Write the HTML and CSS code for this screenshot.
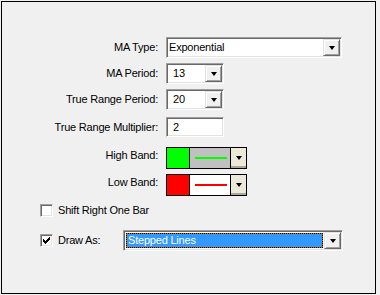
FILE: index.html
```html
<!DOCTYPE html>
<html>
<head>
<meta charset="utf-8">
<link rel="stylesheet" href="styles.css">
</head>
<body>
<div class="frame">
  <div class="row r1">
    <span class="lbl">MA Type:</span>
    <div class="combo w-type">
      <div class="field"><span class="txt txt-name">Exponential</span></div>
      <div class="btn"><span class="arrow"></span></div>
    </div>
  </div>
  <div class="row r2">
    <span class="lbl">MA Period:</span>
    <div class="combo w-small">
      <div class="field"><span class="txt txt-num">13</span></div>
      <div class="btn"><span class="arrow"></span></div>
    </div>
  </div>
  <div class="row r3">
    <span class="lbl">True Range Period:</span>
    <div class="combo w-small">
      <div class="field"><span class="txt txt-num">20</span></div>
      <div class="btn"><span class="arrow"></span></div>
    </div>
  </div>
  <div class="row r4">
    <span class="lbl">True Range Multiplier:</span>
    <div class="textbox"><span class="txt txt-num">2</span></div>
  </div>
  <div class="row r5">
    <span class="lbl lbl-up">High Band:</span>
    <div class="color">
      <div class="swatch sw-green"></div>
      <div class="preview pv-gray"><span class="pline pl-green"></span></div>
      <div class="cbtn"><span class="arrow"></span></div>
    </div>
  </div>
  <div class="row r6">
    <span class="lbl lbl-up2">Low Band:</span>
    <div class="color">
      <div class="swatch sw-red"></div>
      <div class="preview pv-white"><span class="pline pl-red"></span></div>
      <div class="cbtn"><span class="arrow"></span></div>
    </div>
  </div>
  <div class="crow c1">
    <span class="check"></span>
    <span class="ctext">Shift Right One Bar</span>
  </div>
  <div class="crow c2">
    <span class="check">
      <svg width="7" height="7" viewBox="0 0 7 7" shape-rendering="crispEdges">
        <rect x="0" y="2" width="1" height="3" fill="#000"/>
        <rect x="1" y="3" width="1" height="3" fill="#000"/>
        <rect x="2" y="4" width="1" height="3" fill="#000"/>
        <rect x="3" y="3" width="1" height="3" fill="#000"/>
        <rect x="4" y="2" width="1" height="3" fill="#000"/>
        <rect x="5" y="1" width="1" height="3" fill="#000"/>
        <rect x="6" y="0" width="1" height="3" fill="#000"/>
      </svg>
    </span>
    <span class="ctext ctext-draw">Draw As:</span>
    <div class="combo w-draw">
      <div class="field field-focus"><span class="sel">Stepped Lines</span></div>
      <div class="btn"><span class="arrow"></span></div>
    </div>
  </div>
</div>
</body>
</html>
```
FILE: styles.css
```css
html, body {
  margin: 0;
  padding: 0;
  background: #f0f0f0;
}
body {
  font-family: "Liberation Sans", Arial, sans-serif;
  font-size: 11px;
  letter-spacing: -0.2px;
  color: #000;
}
.frame {
  margin: 1px 0 0 1px;
  width: 375px;
  height: 293px;
  box-sizing: border-box;
  border: 1px solid #000;
  background: #f0f0f0;
  overflow: hidden;
}
.row {
  display: flex;
  align-items: center;
}
.r1 { margin-top: 35px; }
.r2 { margin-top: 5px; }
.r3 { margin-top: 5px; }
.r4 { margin-top: 7px; }
.r5 { margin-top: 10px; }
.r6 { margin-top: 5px; }
.lbl {
  width: 156px;
  margin-right: 8px;
  text-align: right;
  white-space: nowrap;
  line-height: 13px;
}
.lbl-up { padding-bottom: 6px; }
.lbl-up2 { padding-bottom: 5px; }

/* sunken 3D controls */
.combo, .textbox {
  box-sizing: border-box;
  height: 21px;
  border: 1px solid;
  border-color: #a0a0a0 #ffffff #ffffff #a0a0a0;
  display: flex;
}
.combo::before { content: none; }
.combo > .field, .textbox > .txt {
  flex: 1;
}
.combo {
  box-shadow: inset 1px 1px 0 #696969, inset -1px -1px 0 #e3e3e3;
  padding: 1px;
}
.textbox {
  height: 20px;
  width: 58px;
  padding: 1px;
  box-shadow: inset 1px 1px 0 #696969, inset -1px -1px 0 #e3e3e3;
}
.w-type { width: 176px; }
.w-small { width: 58px; }
.w-draw { width: 220px; }
.field {
  background: #fff;
  display: flex;
  align-items: center;
  min-width: 0;
}
.textbox {
  background: #fff;
  background-clip: padding-box;
  align-items: center;
}
.txt {
  white-space: nowrap;
  line-height: 13px;
}
.txt-name { padding-left: 1px; }
.txt-num { padding-left: 5px; }
.btn {
  box-sizing: border-box;
  width: 17px;
  height: 17px;
  background: #f0f0f0;
  border: 1px solid;
  border-color: #e3e3e3 #696969 #696969 #e3e3e3;
  box-shadow: inset 1px 1px 0 #fff, inset -1px -1px 0 #a0a0a0;
  display: flex;
  align-items: center;
  justify-content: center;
}
.arrow {
  width: 0;
  height: 0;
  border-left: 3.5px solid transparent;
  border-right: 3.5px solid transparent;
  border-top: 4px solid #000;
}

/* colour pickers */
.color {
  box-sizing: border-box;
  display: flex;
  width: 81px;
  height: 22px;
  border: 1px solid #000;
}
.swatch {
  width: 22px;
  border-right: 1px solid #000;
}
.sw-green { background: #00ff00; }
.sw-red { background: #ff0000; }
.preview {
  width: 40px;
  border-right: 1px solid #000;
  display: flex;
  align-items: center;
  padding-left: 5px;
  box-sizing: border-box;
  width: 41px;
}
.pv-gray { background: #c0c0c0; }
.pv-white { background: #fff; }
.pline {
  width: 32px;
  height: 2px;
}
.pl-green { background: #00ff00; }
.pl-red { background: #ff0000; }
.cbtn {
  flex: 1;
  background: #ece9d8;
  box-shadow: inset 0 -2px 0 #aca899;
  display: flex;
  align-items: center;
  justify-content: center;
}

/* checkbox rows */
.crow {
  display: flex;
  align-items: center;
  padding-left: 38px;
}
.c1 { margin-top: 8px; }
.c2 { margin-top: 13px; }
.check {
  box-sizing: border-box;
  width: 13px;
  height: 13px;
  background: #fff;
  border: 1px solid;
  border-color: #a0a0a0 #fff #fff #a0a0a0;
  box-shadow: inset 1px 1px 0 #696969, inset -1px -1px 0 #e3e3e3;
  display: flex;
  align-items: center;
  justify-content: center;
}
.check svg { display: block; }
.ctext {
  margin-left: 5px;
  white-space: nowrap;
  line-height: 13px;
}
.ctext-draw {
  width: 65px;
}
.field-focus {
  padding: 1px;
  align-items: stretch;
}
.sel {
  flex: 1;
  box-sizing: border-box;
  border: 1px dotted #000;
  background: linear-gradient(#3399ff, #3399ff) padding-box, linear-gradient(#cc6600, #cc6600) border-box;
  color: #fff;
  line-height: 12px;
  padding-left: 1px;
  white-space: nowrap;
}
```
